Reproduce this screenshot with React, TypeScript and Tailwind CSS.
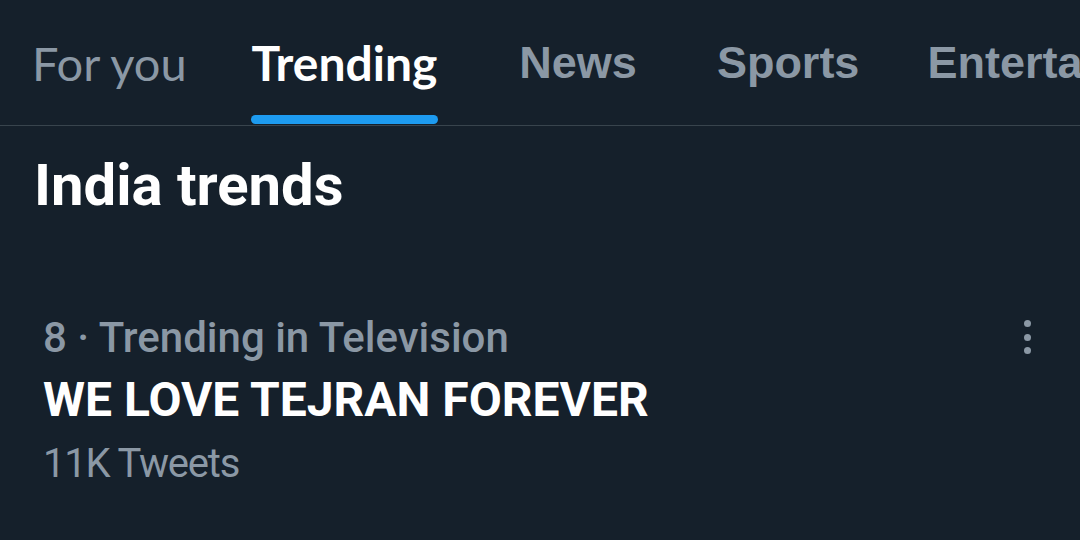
import React from 'react';

const tabs = [
  { label: 'For you', size: 'text-[47px]', cls: "ml-[32px] font-['Lato'] font-normal text-[#8b98a5]" },
  { label: 'Trending', size: 'text-[48px]', cls: "ml-[65px] font-['Lato'] font-bold text-white", active: true },
  { label: 'News', size: 'text-[45px]', cls: "ml-[82px] font-['Liberation_Sans'] font-bold text-[#8b98a5]" },
  { label: 'Sports', size: 'text-[45px]', cls: "ml-[80px] font-['Liberation_Sans'] font-bold text-[#8b98a5]" },
  { label: 'Entertainment', size: 'text-[45px]', cls: "ml-[68px] font-['Liberation_Sans'] font-bold text-[#8b98a5]" },
];

const App: React.FC = () => {
  return (
    <div className="w-[1080px] h-[540px] bg-[#15202b] overflow-hidden">
      {/* Tab bar */}
      <div className="flex h-[126px] border-b border-[#38444d] whitespace-nowrap overflow-hidden">
        {tabs.map((t) => (
          <div key={t.label} className={`relative shrink-0 flex flex-col ${t.cls}`}>
            <span className={`${t.size} leading-[56px] mt-[35px]`}>{t.label}</span>
            {t.active && (
              <div className="absolute left-[-1px] right-[-1px] bottom-[1px] h-[9px] rounded-full bg-[#1d9bf0]" />
            )}
          </div>
        ))}
      </div>

      {/* Heading */}
      <h1 className="ml-[34px] mt-[27px] font-['Roboto'] font-bold text-[58px] leading-[64px] text-white">
        India trends
      </h1>

      {/* Trend item */}
      <div className="flex justify-between mt-[98px] pl-[43px] pr-[49px]">
        <div className="flex flex-col font-['Roboto']">
          <span className="text-[42px] leading-[46px] font-medium text-[#8b98a5]">8 · Trending in Television</span>
          <span className="text-[48px] leading-[60px] mt-[9px] font-bold text-white">WE LOVE TEJRAN FOREVER</span>
          <span className="text-[40px] leading-[52px] mt-[8px] tracking-[-1.2px] text-[#8b98a5]">11K Tweets</span>
        </div>
        <div className="flex flex-col gap-[6.5px] pt-[5px]">
          <span className="w-[7px] h-[7px] rounded-full bg-[#8b98a5]" />
          <span className="w-[7px] h-[7px] rounded-full bg-[#8b98a5]" />
          <span className="w-[7px] h-[7px] rounded-full bg-[#8b98a5]" />
        </div>
      </div>
    </div>
  );
};

export default App;
